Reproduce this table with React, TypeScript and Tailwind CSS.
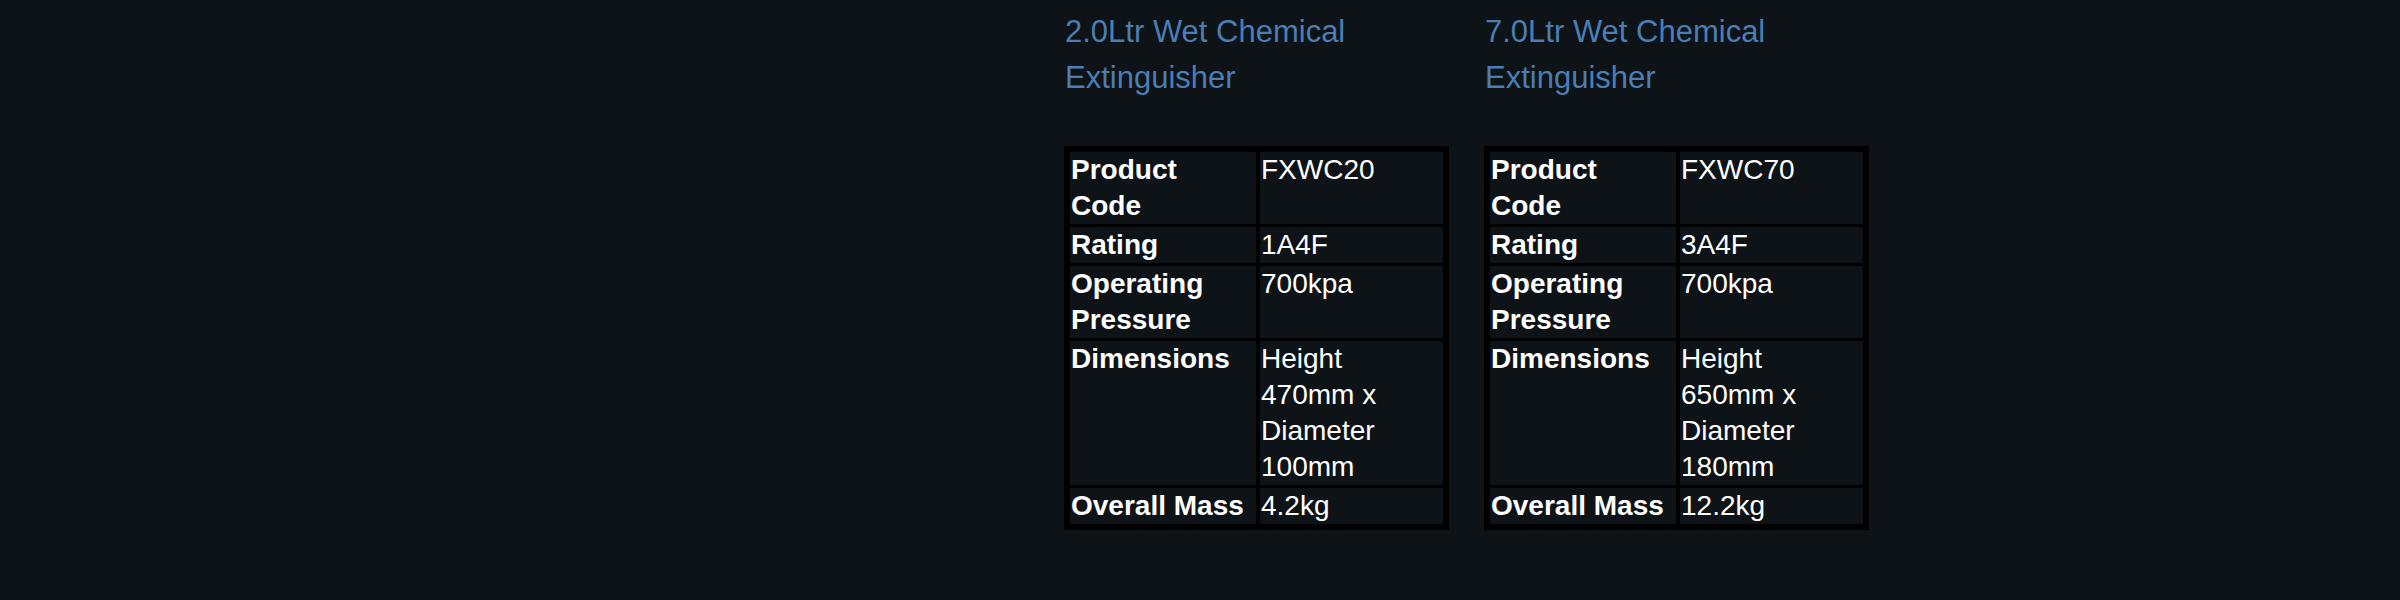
const products = [
  {
    title: "2.0Ltr Wet Chemical Extinguisher",
    rows: [
      ["Product Code", "FXWC20"],
      ["Rating", "1A4F"],
      ["Operating Pressure", "700kpa"],
      ["Dimensions", "Height 470mm x Diameter 100mm"],
      ["Overall Mass", "4.2kg"],
    ],
  },
  {
    title: "7.0Ltr Wet Chemical Extinguisher",
    rows: [
      ["Product Code", "FXWC70"],
      ["Rating", "3A4F"],
      ["Operating Pressure", "700kpa"],
      ["Dimensions", "Height 650mm x Diameter 180mm"],
      ["Overall Mass", "12.2kg"],
    ],
  },
];

const SpecTable = ({ rows }: { rows: string[][] }) => {
  return (
    <div className="grid grid-cols-[186px_183px] gap-x-[4px] gap-y-[3px] bg-black p-[6px] text-[28px] leading-[36px] text-white">
      {rows.map(([label, value]) => (
        <div key={label} className="contents">
          <div className="bg-[#0e1317] pl-[1px] pr-[4px] font-bold">{label}</div>
          <div className="bg-[#0e1317] pl-[1px] pr-[4px]">{value}</div>
        </div>
      ))}
    </div>
  );
};

export default function App() {
  return (
    <div className="h-[600px] w-[2400px] bg-[#0e1317] font-['Liberation_Sans',Arial,sans-serif]">
      <div className="ml-[1064px] flex gap-[35px] pt-[9px]">
        {products.map((p) => (
          <div key={p.title} className="w-[385px]">
            <h2 className="mb-[45px] pl-[1px] text-[31px] leading-[46px] text-[#4a7eb4]">{p.title}</h2>
            <SpecTable rows={p.rows} />
          </div>
        ))}
      </div>
    </div>
  );
}
